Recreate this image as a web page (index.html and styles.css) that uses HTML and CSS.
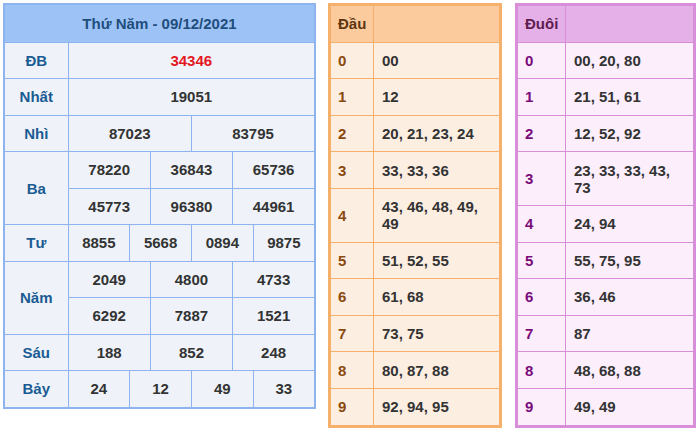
FILE: index.html
```html
<!DOCTYPE html>
<html lang="vi">
<head>
<meta charset="utf-8">
<title>KQXS</title>
<link rel="stylesheet" href="styles.css">
</head>
<body>
<div class="wrap">
  <table class="kq">
    <colgroup>
      <col class="c-lab">
      <col><col><col><col><col><col><col><col><col><col><col><col>
    </colgroup>
    <thead>
      <tr><th colspan="13" class="title">Thứ Năm - 09/12/2021</th></tr>
    </thead>
    <tbody>
      <tr><td class="lab">ĐB</td><td colspan="12" class="db">34346</td></tr>
      <tr><td class="lab">Nhất</td><td colspan="12">19051</td></tr>
      <tr><td class="lab">Nhì</td><td colspan="6">87023</td><td colspan="6">83795</td></tr>
      <tr><td class="lab" rowspan="2">Ba</td><td colspan="4">78220</td><td colspan="4">36843</td><td colspan="4">65736</td></tr>
      <tr><td colspan="4">45773</td><td colspan="4">96380</td><td colspan="4">44961</td></tr>
      <tr><td class="lab">Tư</td><td colspan="3">8855</td><td colspan="3">5668</td><td colspan="3">0894</td><td colspan="3">9875</td></tr>
      <tr><td class="lab" rowspan="2">Năm</td><td colspan="4">2049</td><td colspan="4">4800</td><td colspan="4">4733</td></tr>
      <tr><td colspan="4">6292</td><td colspan="4">7887</td><td colspan="4">1521</td></tr>
      <tr><td class="lab">Sáu</td><td colspan="4">188</td><td colspan="4">852</td><td colspan="4">248</td></tr>
      <tr><td class="lab">Bảy</td><td colspan="3">24</td><td colspan="3">12</td><td colspan="3">49</td><td colspan="3">33</td></tr>
    </tbody>
  </table>

  <table class="lt dau">
    <colgroup><col class="c-d"><col></colgroup>
    <thead><tr><th>Đầu</th><th></th></tr></thead>
    <tbody>
      <tr><td class="d">0</td><td>00</td></tr>
      <tr><td class="d">1</td><td>12</td></tr>
      <tr><td class="d">2</td><td>20, 21, 23, 24</td></tr>
      <tr><td class="d">3</td><td>33, 33, 36</td></tr>
      <tr><td class="d">4</td><td>43, 46, 48, 49, 49</td></tr>
      <tr><td class="d">5</td><td>51, 52, 55</td></tr>
      <tr><td class="d">6</td><td>61, 68</td></tr>
      <tr><td class="d">7</td><td>73, 75</td></tr>
      <tr><td class="d">8</td><td>80, 87, 88</td></tr>
      <tr><td class="d">9</td><td>92, 94, 95</td></tr>
    </tbody>
  </table>

  <table class="lt duoi">
    <colgroup><col class="c-d"><col></colgroup>
    <thead><tr><th>Đuôi</th><th></th></tr></thead>
    <tbody>
      <tr><td class="d">0</td><td>00, 20, 80</td></tr>
      <tr><td class="d">1</td><td>21, 51, 61</td></tr>
      <tr><td class="d">2</td><td>12, 52, 92</td></tr>
      <tr><td class="d">3</td><td>23, 33, 33, 43, 73</td></tr>
      <tr><td class="d">4</td><td>24, 94</td></tr>
      <tr><td class="d">5</td><td>55, 75, 95</td></tr>
      <tr><td class="d">6</td><td>36, 46</td></tr>
      <tr><td class="d">7</td><td>87</td></tr>
      <tr><td class="d">8</td><td>48, 68, 88</td></tr>
      <tr><td class="d">9</td><td>49, 49</td></tr>
    </tbody>
  </table>
</div>
</body>
</html>
```

FILE: styles.css
```css
html, body {
  margin: 0;
  padding: 0;
  background: #ffffff;
}
body {
  font-family: "Liberation Sans", Arial, sans-serif;
  font-size: 15px;
  font-weight: bold;
  color: #333333;
}
.wrap {
  display: flex;
  align-items: flex-start;
  padding: 3px 0 0 3px;
}
table {
  border-collapse: collapse;
  table-layout: fixed;
}
td, th {
  padding: 9.25px 0;
  line-height: 17px;
}

/* results table */
.kq {
  width: 313px;
  border: 2px solid #8db4ee;
  background: #eff3f9;
}
.kq .c-lab { width: 64px; }
.kq td, .kq th {
  border: 1px solid #8db4ee;
  text-align: center;
  vertical-align: middle;
}
.kq .title {
  background: #9dc2f6;
  color: #1f4e7c;
  padding-top: 9.75px;
  padding-bottom: 9.75px;
}
.kq .lab { color: #1b5b93; }
.kq .db { color: #e3171f; }

/* loto tables */
.lt {
  border-style: solid;
  border-width: 3px;
}
.lt td, .lt th {
  border-width: 1px;
  border-style: solid;
  text-align: left;
  vertical-align: middle;
  padding-left: 7px;
  padding-right: 10px;
  padding-top: 9.3px;
  padding-bottom: 9.3px;
}
.lt td + td { padding-left: 8px; }

.dau {
  width: 174px;
  margin-left: 12px;
  background: #fdeee2;
  border-color: #f5b06c;
}
.dau td, .dau th { border-color: #f5b06c; }
.dau th { background: #fccb9d; color: #5e3512; }
.dau .c-d { width: 44px; }
.dau .d { color: #8a4a0e; }

.duoi {
  width: 181px;
  margin-left: 13px;
  background: #fceefb;
  border-color: #d98ed9;
}
.duoi td, .duoi th { border-color: #d98ed9; }
.duoi th { background: #e5afe7; color: #5e1c4f; }
.duoi .c-d { width: 49px; }
.duoi .d { color: #7a0b7a; }
```
